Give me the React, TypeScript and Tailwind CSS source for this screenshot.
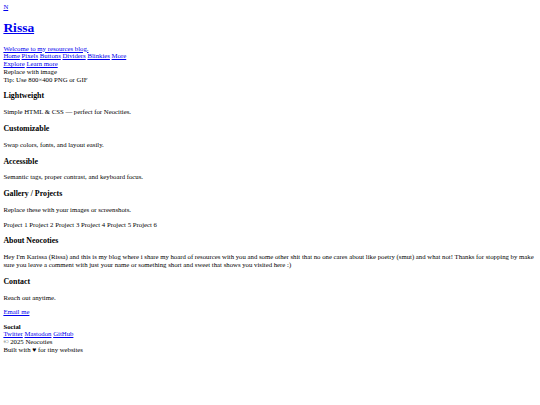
import React from "react";

const A = ({ children }: { children: React.ReactNode }) => (
  <a href="#" className="text-[#0000EE] underline">
    {children}
  </a>
);

const H3 = ({ children }: { children: React.ReactNode }) => (
  <h3 className="text-[1.17em] font-bold my-[1em]">{children}</h3>
);

const P = ({ children }: { children: React.ReactNode }) => (
  <p className="my-[1em]">{children}</p>
);

export default function App() {
  return (
    <div className="bg-white text-black font-['Liberation_Serif',serif] text-[6.75px] leading-[1.15] p-[3.375px] min-h-[405px]">
      <div>
        <A>N</A>
      </div>
      <h1 className="text-[2em] font-bold my-[0.67em]">
        <A>Rissa</A>
      </h1>
      <div>
        <A>Welcome to my resources blog.</A>
      </div>
      <nav>
        <A>Home</A> <A>Pixels</A> <A>Buttons</A> <A>Dividers</A> <A>Blinkies</A> <A>More</A>
      </nav>
      <div>
        <A>Explore</A> <A>Learn more</A>
      </div>
      <div>Replace with image</div>
      <div>Tip: Use 800×400 PNG or GIF</div>

      <H3>Lightweight</H3>
      <P>Simple HTML &amp; CSS — perfect for Neocities.</P>
      <H3>Customizable</H3>
      <P>Swap colors, fonts, and layout easily.</P>
      <H3>Accessible</H3>
      <P>Semantic tags, proper contrast, and keyboard focus.</P>

      <H3>Gallery / Projects</H3>
      <P>Replace these with your images or screenshots.</P>
      <P>
        <span>Project 1</span> <span>Project 2</span> <span>Project 3</span>{" "}
        <span>Project 4</span> <span>Project 5</span> <span>Project 6</span>
      </P>

      <H3>About Neocoties</H3>
      <P>
        Hey I'm Karissa (Rissa) and this is my blog where i share my hoard of resources with you and some other shit that no one cares about like poetry (smut) and what not! Thanks for stopping by make sure you leave a comment with just your name or something short and sweet that shows you visited here :)
      </P>

      <H3>Contact</H3>
      <P>Reach out anytime.</P>
      <P>
        <A>Email me</A>
      </P>

      <div className="font-bold">Social</div>
      <div>
        <A>Twitter</A> <A>Mastodon</A> <A>GitHub</A>
      </div>
      <div>© 2025 Neocoties</div>
      <div>Built with ♥ for tiny websites</div>
    </div>
  );
}
